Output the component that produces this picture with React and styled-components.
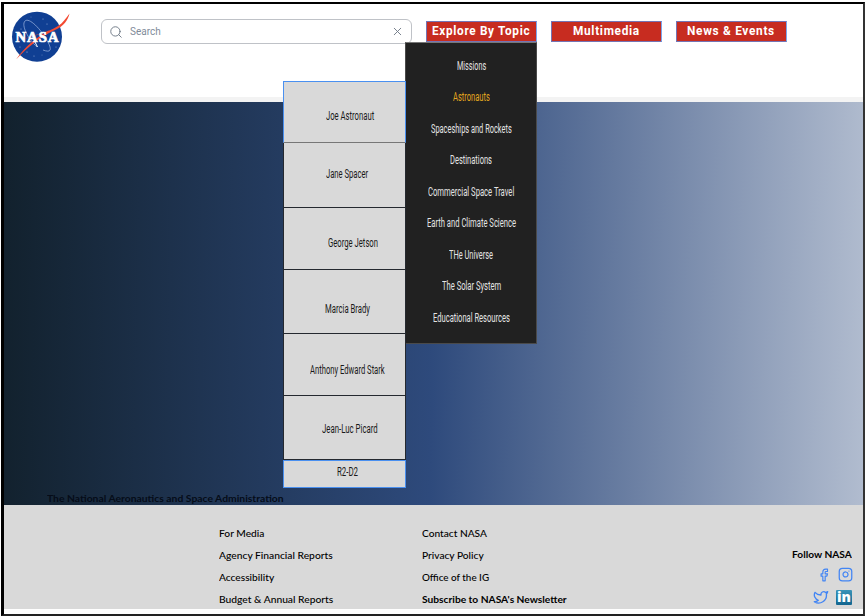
import React, { useLayoutEffect, useRef, useState } from "react";
import styled, { createGlobalStyle, css } from "styled-components";
import { Search, X, Facebook, Instagram, Twitter } from "lucide-react";

const GlobalStyle = createGlobalStyle`
  *, *::before, *::after { box-sizing: border-box; }
  body { margin: 0; background: #fff; overflow: hidden; }
`;

const FitBox = styled.span`
  display: block;
  flex: none;
  width: ${(p) => p.$width}px;
  white-space: nowrap;
`;

const FitInner = styled.span`
  display: inline-block;
  transform-origin: 0 50%;
`;

/* Condenses or widens one line of text to the given width. */
function FitText({ width, children }) {
  const ref = useRef(null);
  const [scale, setScale] = useState(1);
  useLayoutEffect(() => {
    const measure = () => {
      if (ref.current) setScale(width / ref.current.offsetWidth);
    };
    measure();
    document.fonts.ready.then(measure);
  }, [width, children]);
  return (
    <FitBox $width={width}>
      <FitInner ref={ref} style={{ transform: `scaleX(${scale})` }}>
        {children}
      </FitInner>
    </FitBox>
  );
}

const Frame = styled.div`
  position: relative;
  display: flex;
  flex-direction: column;
  width: 864px;
  height: 614px;
  margin: 2px 0 0 1px;
  border: solid #000;
  border-width: 2px 2px 2px 3px;
  border-right-color: #333;
  border-bottom-color: #222;
  background: #fff;
`;

const Header = styled.header`
  display: flex;
  align-items: flex-start;
  height: 98px;
  flex: none;
  border-bottom: 5px solid #f3f3f3;
`;

const Logo = styled.svg`
  flex: none;
  width: 66px;
  height: 62px;
  margin-left: 4px;
`;

const SearchBox = styled.div`
  display: flex;
  align-items: center;
  width: 311px;
  height: 25px;
  margin: 15px 14px 0 27px;
  padding: 0 7px 0 7px;
  border: 1px solid #bfc2c7;
  border-radius: 6px;
  color: #6d7784;
`;

const SearchText = styled.span`
  flex: 1;
  margin-left: 7px;
  font: 10px/14px Roboto, sans-serif;
  color: #7f8b9a;
`;

const Nav = styled.nav`
  display: flex;
  gap: 14px;
  margin-top: 17px;
`;

const NavButton = styled.button`
  display: flex;
  align-items: center;
  justify-content: center;
  width: 111px;
  height: 21px;
  padding: 0 1px 1px 0;
  border: 1px solid #7474b4;
  border-right-color: #7ca6ec;
  background: #c72c20;
  color: #fff;
  font: 700 12px/18px Roboto, sans-serif;
  letter-spacing: 0.7px;
`;

const Hero = styled.main`
  display: flex;
  align-items: flex-end;
  flex: none;
  height: 403px;
  padding-left: 43px;
  background: linear-gradient(91deg, #12212d 0%, #2e4a7c 50%, #b1bccf 100%);
`;

const Agency = styled.div`
  font: 700 10px/13px Lato, sans-serif;
  color: #050c18;
`;

const Footer = styled.footer`
  display: flex;
  flex: none;
  height: 104px;
  padding: 16px 11px 0 215px;
  background: #d9d9d9;
  color: #000;
`;

const LinkColumn = styled.div`
  display: grid;
  grid-template-rows: 23px 22px 22px 22px;
  align-items: center;
  align-self: flex-start;
  width: 203px;
`;

const FooterLink = styled.a`
  font: ${(p) => (p.$bold ? 700 : 500)} 10px/14px Lato, sans-serif;
`;

const Follow = styled.div`
  display: flex;
  flex-direction: column;
  align-items: flex-end;
  margin: 26px 0 0 auto;
  font: 700 10px/14px Lato, sans-serif;
`;

const Social = styled.div`
  display: grid;
  grid-template-columns: 17px 16px;
  column-gap: 5px;
  row-gap: 7px;
  align-items: center;
  justify-items: center;
  margin-top: 6px;
  color: #4285f4;
`;

const FacebookIcon = styled(Facebook)`
  margin-left: 2px;
`;

const PhotoIcon = styled(Instagram)`
  margin-left: 2px;
`;

const BirdIcon = styled(Twitter)`
  margin-right: 3px;
`;

const LinkedIn = styled.span`
  width: 16px;
  height: 15px;
  border-radius: 1px;
  background: linear-gradient(#3a94b8, #12658f);
  color: #fff;
  font: 800 14px/13px "Open Sans", sans-serif;
  text-align: center;
`;

const menuFont = css`
  font: 12px/14px Roboto, sans-serif;
`;

const TopicMenu = styled.div`
  position: absolute;
  left: 401px;
  top: 38px;
  display: grid;
  grid-auto-rows: 31.5px;
  width: 132px;
  height: 302px;
  padding: 7px 0 0;
  border: 1px solid #4a4a4a;
  border-top-color: #777;
  background: #212121;
`;

const TopicItem = styled.div`
  display: flex;
  align-items: center;
  justify-content: center;
  color: ${(p) => (p.$active ? "#e3a71f" : "#e4e4e4")};
  ${menuFont}
`;

const AstronautMenu = styled.div`
  position: absolute;
  left: 279px;
  top: 77px;
  width: 123px;
`;

const AstronautItem = styled.div`
  display: flex;
  align-items: flex-start;
  height: ${(p) => p.$height}px;
  padding: ${(p) => p.$top}px 0 0 ${(p) => p.$left}px;
  border-style: solid;
  border-width: ${(p) => (p.$outlined ? "1px" : "0 1px 1px")};
  border-color: ${(p) => (p.$outlined ? "#4a90f0" : "#25292f")};
  background: #d9d9d9;
  color: #191919;
  ${menuFont}
  ${(p) =>
    p.$first &&
    css`
      border-bottom-color: #777;
    `}
`;

const topics = [
  ["Missions", 29],
  ["Astronauts", 37],
  ["Spaceships and Rockets", 81],
  ["Destinations", 42],
  ["Commercial Space Travel", 86],
  ["Earth and Climate Science", 89],
  ["THe Universe", 44],
  ["The Solar System", 59],
  ["Educational Resources", 77],
];

const astronauts = [
  { name: "Joe Astronaut", width: 48, height: 62, top: 27, left: 42 },
  { name: "Jane Spacer", width: 42, height: 65, top: 24, left: 42 },
  { name: "George Jetson", width: 50, height: 62, top: 28, left: 44 },
  { name: "Marcia Brady", width: 45, height: 64, top: 32, left: 41 },
  { name: "Anthony Edward Stark", width: 75, height: 62, top: 29, left: 26 },
  { name: "Jean-Luc Picard", width: 56, height: 64, top: 26, left: 38 },
  { name: "R2-D2", width: 21, height: 28, top: 4, left: 53 },
];

const footerColumns = [
  [
    ["For Media", 45],
    ["Agency Financial Reports", 114],
    ["Accessibility", 55],
    ["Budget & Annual Reports", 114],
  ],
  [
    ["Contact NASA", 65],
    ["Privacy Policy", 62],
    ["Office of the IG", 67],
    ["Subscribe to NASA's Newsletter", 145],
  ],
];

function NasaLogo() {
  return (
    <Logo viewBox="8 4 66 62">
      <circle cx="37" cy="36.7" r="25" fill="#103f93" />
      <g fill="#9eb5df">
        <circle cx="21" cy="29" r=".5" />
        <circle cx="31" cy="17" r=".4" />
        <circle cx="43" cy="19" r=".5" />
        <circle cx="47" cy="24" r=".5" />
        <circle cx="20" cy="47" r=".5" />
        <circle cx="27" cy="52" r=".6" />
        <circle cx="34" cy="56" r=".5" />
        <circle cx="42" cy="55" r=".4" />
        <circle cx="56" cy="47" r=".5" />
      </g>
      <path
        d="M37 47 C28 39 21 25 25 21 C29 17 41 29 48 42 C52 50 51 53 43 50"
        fill="none"
        stroke="#91a9d8"
        strokeWidth=".8"
      />
      <path
        d="M8 44.8 C25 38 48 33 58 26 C63 23 66 18 69.5 13.5 C68 20 64 26 55 30 C40 37 28 47 16 59.5 C25 47 35 38 50 30 C38 35 22 39 8 44.8Z"
        fill="#f34a32"
      />
      <text
        x="15.5"
        y="41.5"
        textLength="44"
        lengthAdjust="spacingAndGlyphs"
        letterSpacing="1"
        fontFamily="'Liberation Serif', serif"
        fontWeight="700"
        fontSize="14.5"
        fill="#fff"
        stroke="#fff"
        strokeWidth=".7"
      >
        NASA
      </text>
      <path d="M35 42 L37.5 47" stroke="#fff" strokeWidth="1" />
    </Logo>
  );
}

export default function App() {
  return (
    <>
      <GlobalStyle />
      <Frame>
        <Header>
          <NasaLogo />
          <SearchBox>
            <Search size={14} strokeWidth={1.6} />
            <SearchText>Search</SearchText>
            <X size={13} strokeWidth={1.7} />
          </SearchBox>
          <Nav>
            <NavButton><FitText width={98}>Explore By Topic</FitText></NavButton>
            <NavButton><FitText width={67}>Multimedia</FitText></NavButton>
            <NavButton><FitText width={88}>News &amp; Events</FitText></NavButton>
          </Nav>
        </Header>
        <Hero>
          <Agency>
            <FitText width={237}>The National Aeronautics and Space Administration</FitText>
          </Agency>
        </Hero>
        <Footer>
          {footerColumns.map((links) => (
            <LinkColumn key={links[0][0]}>
              {links.map(([label, width]) => (
                <FooterLink key={label} $bold={label.startsWith("Subscribe")}>
                  <FitText width={width}>{label}</FitText>
                </FooterLink>
              ))}
            </LinkColumn>
          ))}
          <Follow>
            <FitText width={60}>Follow NASA</FitText>
            <Social>
              <FacebookIcon size={14} strokeWidth={2} />
              <PhotoIcon size={15} strokeWidth={2} />
              <BirdIcon size={16} strokeWidth={2} />
              <LinkedIn>in</LinkedIn>
            </Social>
          </Follow>
        </Footer>
        <TopicMenu>
          {topics.map(([label, width]) => (
            <TopicItem key={label} $active={label === "Astronauts"}>
              <FitText width={width}>{label}</FitText>
            </TopicItem>
          ))}
        </TopicMenu>
        <AstronautMenu>
          {astronauts.map((a, i) => (
            <AstronautItem
              key={a.name}
              $height={a.height}
              $top={a.top}
              $left={a.left}
              $first={i === 0}
              $outlined={i === 0 || i === astronauts.length - 1}
            >
              <FitText width={a.width}>{a.name}</FitText>
            </AstronautItem>
          ))}
        </AstronautMenu>
      </Frame>
    </>
  );
}
